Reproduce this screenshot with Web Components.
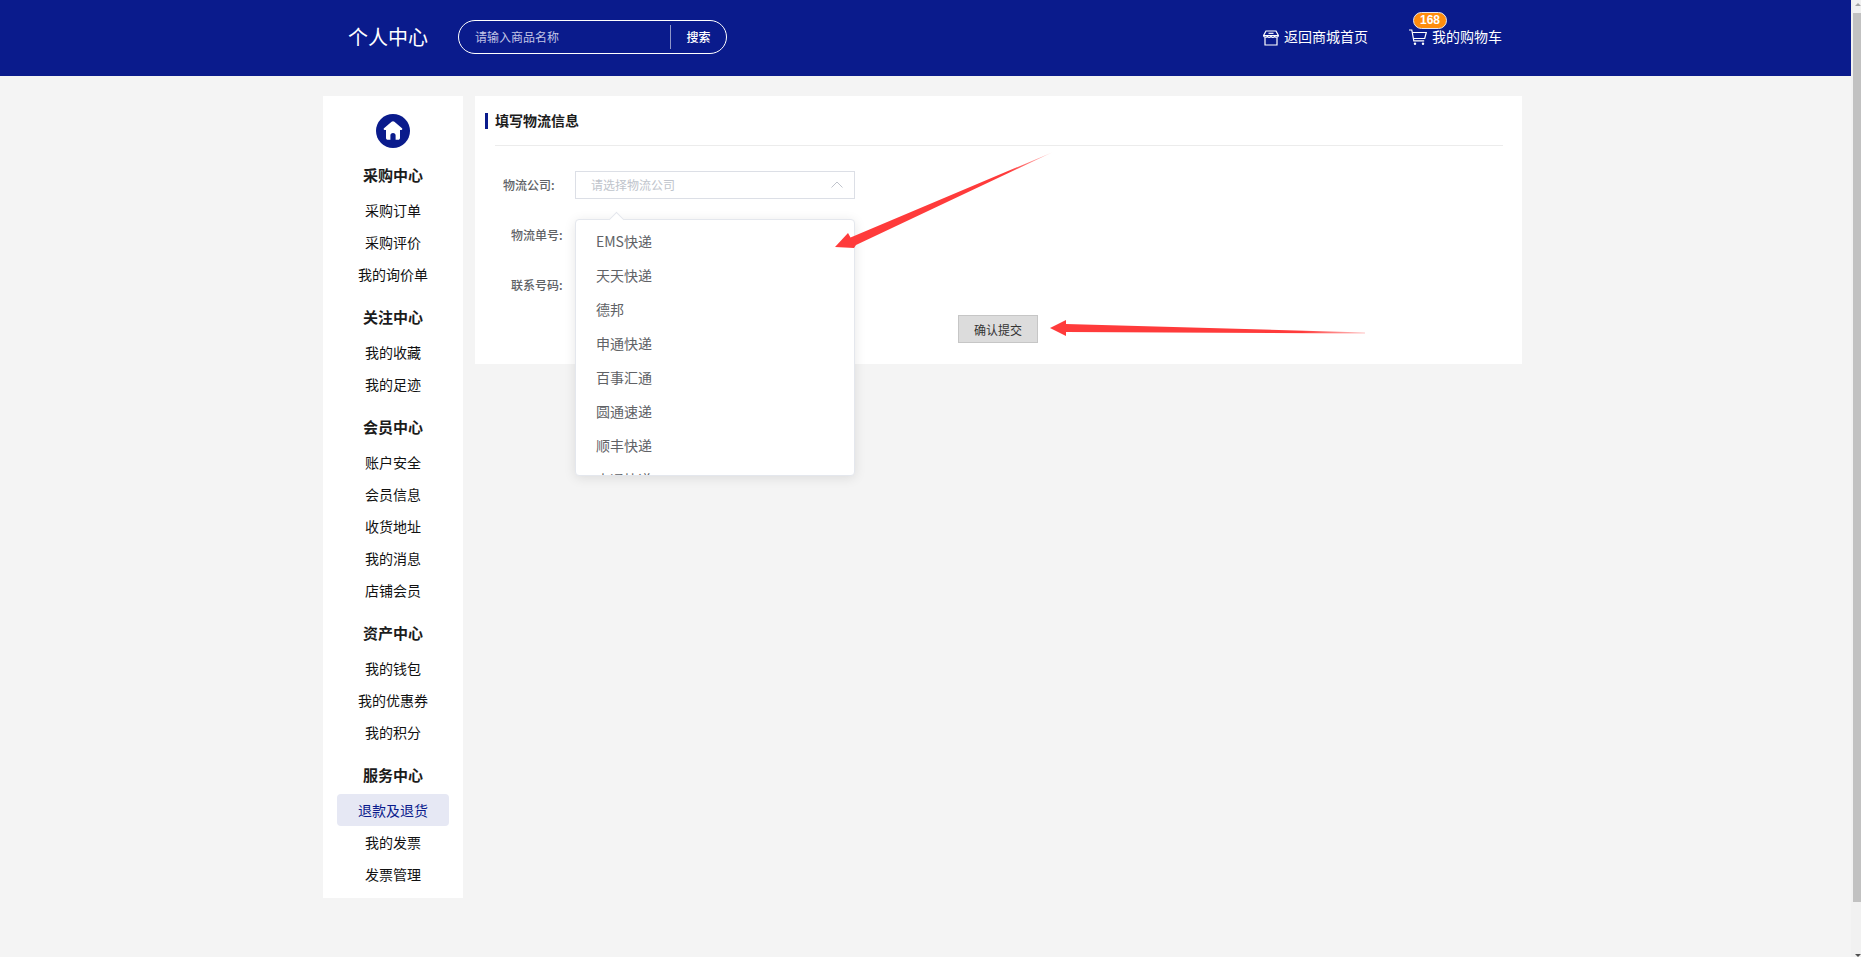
<!DOCTYPE html>
<html lang="zh-CN">
<head>
<meta charset="utf-8">
<title>填写物流信息</title>
<style>
    html, body { margin: 0; height: 100%; overflow: hidden; }
    body {
        background: #f4f4f4;
        font-family: "Noto Sans CJK SC", "Noto Sans", sans-serif;
    }
</style>
</head>
<body>
<page-shell>
    <site-header slot="top"></site-header>
    <side-nav>
        <nav-group heading="采购中心">
            <nav-item>采购订单</nav-item>
            <nav-item>采购评价</nav-item>
            <nav-item>我的询价单</nav-item>
        </nav-group>
        <nav-group heading="关注中心">
            <nav-item>我的收藏</nav-item>
            <nav-item>我的足迹</nav-item>
        </nav-group>
        <nav-group heading="会员中心">
            <nav-item>账户安全</nav-item>
            <nav-item>会员信息</nav-item>
            <nav-item>收货地址</nav-item>
            <nav-item>我的消息</nav-item>
            <nav-item>店铺会员</nav-item>
        </nav-group>
        <nav-group heading="资产中心">
            <nav-item>我的钱包</nav-item>
            <nav-item>我的优惠券</nav-item>
            <nav-item>我的积分</nav-item>
        </nav-group>
        <nav-group heading="服务中心">
            <nav-item active>退款及退货</nav-item>
            <nav-item>我的发票</nav-item>
            <nav-item>发票管理</nav-item>
        </nav-group>
    </side-nav>
    <logistics-panel>
        <form-row label="物流公司:" indent="28">
            <select-box placeholder="请选择物流公司"></select-box>
        </form-row>
        <form-row label="物流单号:" indent="36" gap="22"></form-row>
        <form-row label="联系号码:" indent="36" gap="22"></form-row>
    </logistics-panel>
</page-shell>

<script>
// outer frame: header on top, two columns below, fake scrollbar on the right
class PageShell extends HTMLElement {
    constructor() {
        super();
        this.attachShadow({ mode: 'open' });
        this.shadowRoot.innerHTML = `
            <style>
                :host { display: flex; height: 957px; }
                .page { width: 1851px; flex: none; }
                .columns {
                    display: flex;
                    align-items: flex-start;
                    gap: 12px;
                    padding: 20px 0 0 323px;
                }
                .bar { width: 10px; flex: none; background: #f1f1f1; position: relative; }
                .thumb { position: absolute; left: 2px; right: 0; top: 13px; height: 889px; background: #c1c1c1; }
                .up, .down { position: absolute; right: 0; width: 0; height: 0; border: 3px solid transparent; }
                .up { top: 0; border-bottom-color: #a3a3a3; }
                .down { bottom: -3px; border-top-color: #505050; }
            </style>
            <div class="page">
                <slot name="top"></slot>
                <div class="columns"><slot></slot></div>
            </div>
            <div class="bar">
                <div class="up"></div>
                <div class="thumb"></div>
                <div class="down"></div>
            </div>`;
    }
}

class SiteHeader extends HTMLElement {
    constructor() {
        super();
        this.attachShadow({ mode: 'open' });
        this.shadowRoot.innerHTML = `
            <style>
                :host {
                    display: flex;
                    align-items: center;
                    height: 76px;
                    padding: 0 349px 3px 348px;
                    box-sizing: border-box;
                    background: #0a1b8c;
                    color: #fff;
                }
                .title { font-size: 20px; width: 80px; margin-right: 30px; white-space: nowrap; }
                .search {
                    display: flex;
                    align-items: center;
                    width: 269px;
                    height: 34px;
                    box-sizing: border-box;
                    border: 1px solid #fff;
                    border-radius: 17px;
                    font-size: 12px;
                }
                .hint { flex: 1; padding-left: 16px; color: #c2c5e6; }
                .btn {
                    width: 55px;
                    height: 24px;
                    line-height: 24px;
                    text-align: center;
                    border-left: 1px solid #8f96c8;
                    font-weight: 500;
                }
                .links { margin-left: auto; display: flex; align-items: center; font-size: 14px; padding-bottom: 2px; }
                .link { display: flex; align-items: center; position: relative; white-space: nowrap; }
                .link svg { margin: 2px 5px -2px 0; }
                .cart { margin-left: 41px; }
                .badge {
                    position: absolute;
                    left: 4px;
                    top: -14px;
                    width: 34px;
                    height: 17px;
                    box-sizing: border-box;
                    border: 1px solid #e6e6f0;
                    border-radius: 9px;
                    background: #ff8d0e;
                    font: 700 12px/15px "Liberation Sans", sans-serif;
                    text-align: center;
                }
            </style>
            <div class="title">个人中心</div>
            <div class="search">
                <div class="hint">请输入商品名称</div>
                <div class="btn">搜索</div>
            </div>
            <div class="links">
                <div class="link home">
                    <svg width="16" height="16" viewBox="0 0 16 16" fill="none" stroke="#fff" stroke-width="1.2">
                        <path d="M3 1h10l2.400 4.400c0 2-2.600 2.400-3.700.9-1 1.300-2.700 1.300-3.700 0-1 1.300-2.700 1.300-3.700 0C3.200 7.800.6 7.400.6 5.400z"/>
                        <path d="M2 7.500V15h12V7.500M.8 5.500h14.400"/>
                        <path d="M5.500 3.300h5"/>
                    </svg>
                    返回商城首页
                </div>
                <div class="link cart">
                    <svg width="18" height="17" viewBox="0 0 18 17" fill="none" stroke="#fff" stroke-width="1.2">
                        <path d="M0 1h2.800l2 10.800h10.400"/>
                        <path d="M3.300 3.500H17.300l-1.600 6H4.500"/>
                        <circle cx="6" cy="14.800" r="1.200" fill="#fff" stroke="none"/>
                        <circle cx="14" cy="14.800" r="1.200" fill="#fff" stroke="none"/>
                    </svg>
                    我的购物车
                    <div class="badge">168</div>
                </div>
            </div>`;
    }
}

class SideNav extends HTMLElement {
    constructor() {
        super();
        this.attachShadow({ mode: 'open' });
        this.shadowRoot.innerHTML = `
            <style>
                :host {
                    display: block;
                    width: 140px;
                    flex: none;
                    height: 802px;
                    box-sizing: border-box;
                    padding-top: 18px;
                    background: #fff;
                }
                .logo {
                    display: block;
                    width: 34px;
                    height: 34px;
                    margin: 0 auto 10px;
                }
                .groups { display: flex; flex-direction: column; gap: 10px; }
            </style>
            <svg class="logo" viewBox="0 0 34 34">
                <circle cx="17" cy="17" r="17" fill="#0a1b8c"/>
                <path fill="#fff" fill-rule="evenodd" d="M17 7.200c.5 0 1 .2 1.400.5l7.600 6.600c.7.6.3 1.700-.6 1.700H24v8c0 1-.8 1.800-1.800 1.800h-2.600v-4.300a2.600 2.600 0 0 0-5.200 0v4.300h-2.600c-1 0-1.800-.8-1.800-1.800v-8H8.600c-.9 0-1.300-1.100-.6-1.700l7.600-6.600c.4-.3.900-.5 1.400-.5z"/>
            </svg>
            <div class="groups"><slot></slot></div>`;
    }
}

class NavGroup extends HTMLElement {
    constructor() {
        super();
        this.attachShadow({ mode: 'open' });
        this.shadowRoot.innerHTML = `
            <style>
                :host { display: block; }
                .heading {
                    height: 36px;
                    line-height: 34px;
                    text-align: center;
                    font-size: 15px;
                    font-weight: 700;
                    color: #1c1c1c;
                }
            </style>
            <div class="heading"></div>
            <slot></slot>`;
    }

    connectedCallback() {
        this.shadowRoot.querySelector('.heading').textContent = this.getAttribute('heading');
    }
}

class NavItem extends HTMLElement {
    constructor() {
        super();
        this.attachShadow({ mode: 'open' });
        this.shadowRoot.innerHTML = `
            <style>
                :host {
                    display: block;
                    width: 112px;
                    height: 32px;
                    margin: 0 auto;
                    line-height: 32px;
                    text-align: center;
                    font-size: 14px;
                    color: #111;
                    border-radius: 4px;
                }
                :host([active]) { background: #e6e8f4; color: #0a1b8c; }
            </style>
            <slot></slot>`;
    }
}

class LogisticsPanel extends HTMLElement {
    constructor() {
        super();
        this.attachShadow({ mode: 'open' });
        this.shadowRoot.innerHTML = `
            <style>
                :host {
                    display: block;
                    position: relative;
                    width: 1047px;
                    height: 268px;
                    flex: none;
                    background: #fff;
                }
                .title {
                    display: flex;
                    align-items: center;
                    height: 47px;
                    padding-bottom: 2px;
                    margin: 0 19px 0 20px;
                    border-bottom: 1px solid #ececec;
                    font-size: 14px;
                    font-weight: 700;
                    color: #1c1c1c;
                    position: relative;
                }
                .title::before {
                    content: '';
                    position: absolute;
                    left: -10px;
                    top: 17px;
                    width: 3px;
                    height: 16px;
                    background: #0a1b8c;
                }
                .rows { padding-top: 25px; }
                .submit {
                    display: block;
                    width: 80px;
                    height: 28px;
                    margin: 16px 0 0 483px;
                    padding: 0;
                    box-sizing: border-box;
                    border: 1px solid #c6c6c6;
                    background: #dcdcdc;
                    color: #333;
                    font: 12px "Noto Sans CJK SC", sans-serif;
                }
                .menu {
                    position: absolute;
                    left: 100px;
                    top: 123px;
                    width: 280px;
                    height: 257px;
                    box-sizing: border-box;
                    border: 1px solid #e4e7ed;
                    border-radius: 4px;
                    background: #fff;
                    box-shadow: 0 2px 12px rgba(0, 0, 0, .1);
                }
                .menu::before {
                    content: '';
                    position: absolute;
                    left: 35px;
                    top: -6px;
                    width: 10px;
                    height: 10px;
                    background: #fff;
                    border: 1px solid #e4e7ed;
                    border-right: 0;
                    border-bottom: 0;
                    transform: rotate(45deg);
                }
                .list { position: relative; height: 255px; overflow: hidden; padding-top: 4px; box-sizing: border-box; }
                .opt {
                    height: 34px;
                    line-height: 34px;
                    padding-left: 20px;
                    font-size: 14px;
                    color: #606266;
                }
                svg.marks { position: absolute; left: 0; top: 0; overflow: visible; pointer-events: none; }
            </style>
            <div class="title">填写物流信息</div>
            <div class="rows"><slot></slot></div>
            <button class="submit">确认提交</button>
            <div class="menu">
                <div class="list">
                    <div class="opt">EMS快递</div>
                    <div class="opt">天天快递</div>
                    <div class="opt">德邦</div>
                    <div class="opt">申通快递</div>
                    <div class="opt">百事汇通</div>
                    <div class="opt">圆通速递</div>
                    <div class="opt">顺丰快递</div>
                    <div class="opt">中通快递</div>
                </div>
            </div>
            <!-- red hand-drawn arrows from the annotated screenshot, panel origin is 475,96 -->
            <svg class="marks" width="1047" height="268">
                <defs>
                    <linearGradient id="fadeA" gradientUnits="userSpaceOnUse" x1="360" y1="151" x2="577" y2="57">
                        <stop offset="0" stop-color="#ff3b3b"/>
                        <stop offset=".8" stop-color="#ff3b3b"/>
                        <stop offset="1" stop-color="#ff3b3b" stop-opacity=".3"/>
                    </linearGradient>
                    <linearGradient id="fadeB" gradientUnits="userSpaceOnUse" x1="575" y1="232" x2="890" y2="237">
                        <stop offset="0" stop-color="#ff3b3b"/>
                        <stop offset=".8" stop-color="#ff3b3b"/>
                        <stop offset="1" stop-color="#ff3b3b" stop-opacity=".3"/>
                    </linearGradient>
                </defs>
                <path fill="url(#fadeA)" d="M360 151L373 137L375.500 141.500L577 56.500L381 149L379 152z"/>
                <path fill="url(#fadeB)" d="M575 232L591 224L591 228L890 236.500V237.500L591 236L591 240z"/>
            </svg>`;
    }
}

class FormRow extends HTMLElement {
    constructor() {
        super();
        this.attachShadow({ mode: 'open' });
        this.shadowRoot.innerHTML = `
            <style>
                :host { display: flex; align-items: center; height: 28px; }
                .label {
                    width: 100px;
                    box-sizing: border-box;
                    padding-bottom: 2px;
                    font-size: 12px;
                    font-weight: 500;
                    color: #606266;
                    white-space: nowrap;
                }
            </style>
            <div class="label"></div>
            <slot></slot>`;
    }

    connectedCallback() {
        const label = this.shadowRoot.querySelector('.label');
        label.textContent = this.getAttribute('label');
        label.style.paddingLeft = this.getAttribute('indent') + 'px';
        this.style.marginTop = (this.getAttribute('gap') || 0) + 'px';
    }
}

class SelectBox extends HTMLElement {
    constructor() {
        super();
        this.attachShadow({ mode: 'open' });
        this.shadowRoot.innerHTML = `
            <style>
                :host {
                    display: flex;
                    align-items: center;
                    justify-content: space-between;
                    width: 280px;
                    height: 28px;
                    box-sizing: border-box;
                    padding: 0 11px 2px 15px;
                    border: 1px solid #dcdfe6;
                    font-size: 12px;
                    color: #c0c4cc;
                }
            </style>
            <span class="hint"></span>
            <svg width="12" height="7" viewBox="0 0 12 7" fill="none" stroke="#c0c4cc" stroke-width="1"><path d="M.5 6.500L6 1l5.500 5.500"/></svg>`;
    }

    connectedCallback() {
        this.shadowRoot.querySelector('.hint').textContent = this.getAttribute('placeholder');
    }
}

customElements.define('page-shell', PageShell);
customElements.define('site-header', SiteHeader);
customElements.define('side-nav', SideNav);
customElements.define('nav-group', NavGroup);
customElements.define('nav-item', NavItem);
customElements.define('logistics-panel', LogisticsPanel);
customElements.define('form-row', FormRow);
customElements.define('select-box', SelectBox);
</script>
</body>
</html>
